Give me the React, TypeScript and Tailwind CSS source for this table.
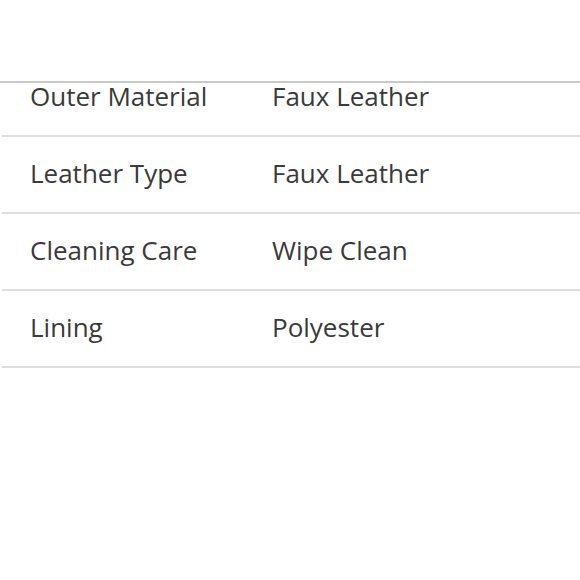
import React from "react";

const rows = [
  ["Outer Material", "Faux Leather"],
  ["Leather Type", "Faux Leather"],
  ["Cleaning Care", "Wipe Clean"],
  ["Lining", "Polyester"],
];

export default function App() {
  return (
    <div
      className="w-[580px] h-[580px] bg-white overflow-hidden text-[#3a3a3a]"
      style={{ fontFamily: '"Open Sans", sans-serif' }}
    >
      <div className="h-[83px] border-b-2 border-[#c9c9c9]" />
      <div className="pl-[2px]">
        {rows.map(([k, v], i) => (
          <div
            key={k}
            className={
              "flex items-end border-b-2 border-[#dedede] " +
              (i === 0 ? "h-[54px]" : "h-[77px]")
            }
          >
            <div className="flex h-[75px] shrink-0 items-center w-full pb-[4px] text-[26px] leading-none">
              <span className="w-[270px] pl-[28px]">{k}</span>
              <span>{v}</span>
            </div>
          </div>
        ))}
      </div>
    </div>
  );
}
